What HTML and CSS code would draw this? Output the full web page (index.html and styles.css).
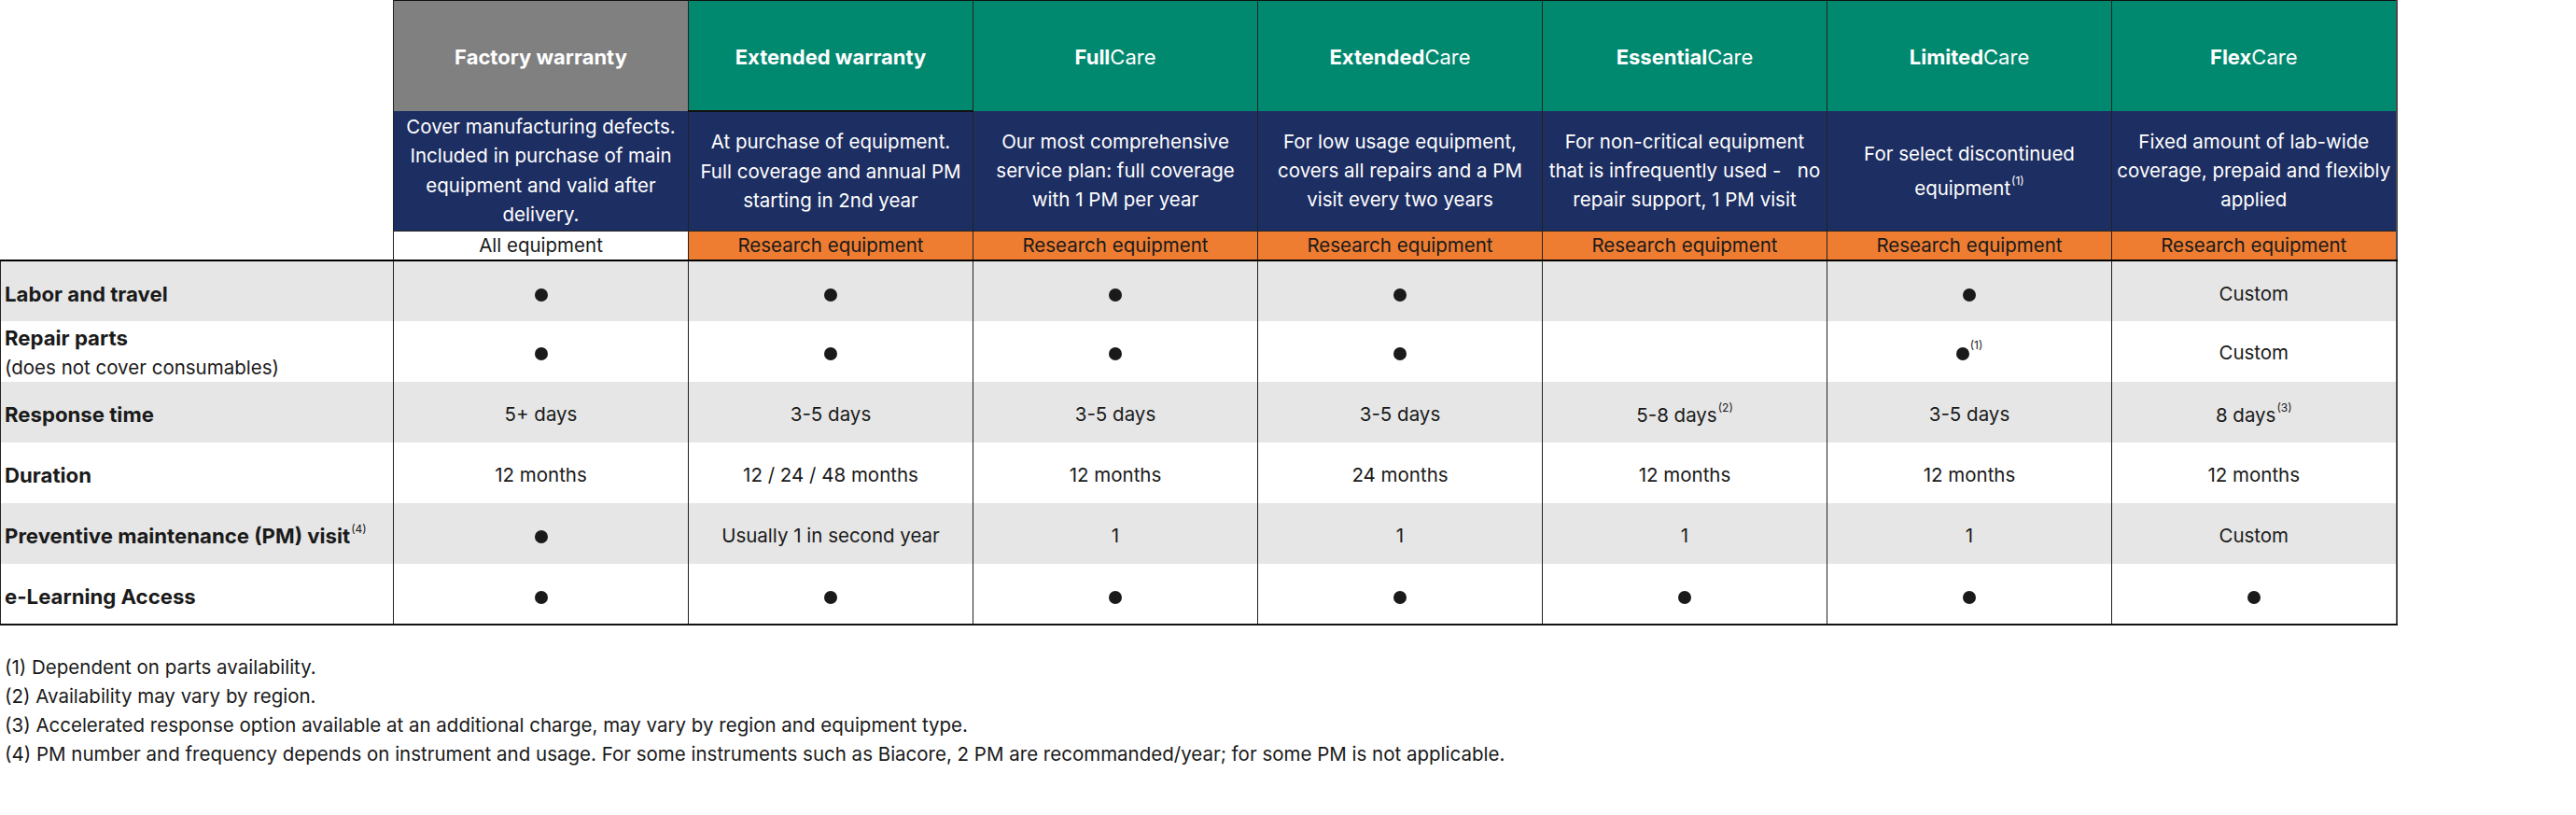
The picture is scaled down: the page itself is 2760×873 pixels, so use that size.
FILE: index.html
```html
<!DOCTYPE html>
<html lang="en">
<head>
<meta charset="utf-8">
<title>Service plans comparison</title>
<link rel="stylesheet" href="styles.css">
</head>
<body>
<table class="plans">
  <colgroup>
    <col class="c-label">
    <col class="c-factory">
    <col class="c-plan" span="6">
  </colgroup>
  <thead>
    <tr class="r-name">
      <th class="corner"></th>
      <th class="name factory">Factory warranty</th>
      <th class="name green ext">Extended warranty</th>
      <th class="name green">Full<span class="reg">Care</span></th>
      <th class="name green">Extended<span class="reg">Care</span></th>
      <th class="name green">Essential<span class="reg">Care</span></th>
      <th class="name green">Limited<span class="reg">Care</span></th>
      <th class="name green last">Flex<span class="reg">Care</span></th>
    </tr>
    <tr class="r-desc">
      <th class="corner"></th>
      <td class="desc">Cover manufacturing defects.<br>Included in purchase of main<br>equipment and valid after<br>delivery.</td>
      <td class="desc">At purchase of equipment.<br>Full coverage and annual PM<br>starting in 2nd year</td>
      <td class="desc">Our most comprehensive<br>service plan: full coverage<br>with 1 PM per year</td>
      <td class="desc">For low usage equipment,<br>covers all repairs and a PM<br>visit every two years</td>
      <td class="desc">For non-critical equipment<br>that is infrequently used -&nbsp;&nbsp; no<br>repair support, 1 PM visit</td>
      <td class="desc tall">For select discontinued<br>equipment<sup class="fn">(1)</sup></td>
      <td class="desc last">Fixed amount of lab-wide<br>coverage, prepaid and flexibly<br>applied</td>
    </tr>
    <tr class="r-scope">
      <th class="corner"></th>
      <td class="scope all">All equipment</td>
      <td class="scope">Research equipment</td>
      <td class="scope">Research equipment</td>
      <td class="scope">Research equipment</td>
      <td class="scope">Research equipment</td>
      <td class="scope">Research equipment</td>
      <td class="scope last">Research equipment</td>
    </tr>
  </thead>
  <tbody>
    <tr class="shade">
      <th class="label"><strong>Labor and travel</strong></th>
      <td><span class="dot"></span></td>
      <td><span class="dot"></span></td>
      <td><span class="dot"></span></td>
      <td><span class="dot"></span></td>
      <td></td>
      <td><span class="dot"></span></td>
      <td class="last">Custom</td>
    </tr>
    <tr class="plain two">
      <th class="label"><strong>Repair parts</strong><br><span class="sub">(does not cover consumables)</span></th>
      <td><span class="dot"></span></td>
      <td><span class="dot"></span></td>
      <td><span class="dot"></span></td>
      <td><span class="dot"></span></td>
      <td></td>
      <td><span class="dot"></span><sup class="fn">(1)</sup></td>
      <td class="last">Custom</td>
    </tr>
    <tr class="shade">
      <th class="label"><strong>Response time</strong></th>
      <td>5+ days</td>
      <td>3-5 days</td>
      <td>3-5 days</td>
      <td>3-5 days</td>
      <td>5-8 days<sup class="fn">(2)</sup></td>
      <td>3-5 days</td>
      <td class="last">8 days<sup class="fn">(3)</sup></td>
    </tr>
    <tr class="plain">
      <th class="label"><strong>Duration</strong></th>
      <td>12 months</td>
      <td>12 / 24 / 48 months</td>
      <td>12 months</td>
      <td>24 months</td>
      <td>12 months</td>
      <td>12 months</td>
      <td class="last">12 months</td>
    </tr>
    <tr class="shade">
      <th class="label"><strong>Preventive maintenance (PM) visit</strong><sup class="fn">(4)</sup></th>
      <td><span class="dot"></span></td>
      <td>Usually 1 in second year</td>
      <td>1</td>
      <td>1</td>
      <td>1</td>
      <td>1</td>
      <td class="last">Custom</td>
    </tr>
    <tr class="plain end">
      <th class="label"><strong>e-Learning Access</strong></th>
      <td><span class="dot"></span></td>
      <td><span class="dot"></span></td>
      <td><span class="dot"></span></td>
      <td><span class="dot"></span></td>
      <td><span class="dot"></span></td>
      <td><span class="dot"></span></td>
      <td class="last"><span class="dot"></span></td>
    </tr>
  </tbody>
</table>
<div class="notes">
  <p>(1) Dependent on parts availability.</p>
  <p>(2) Availability may vary by region.</p>
  <p>(3) Accelerated response option available at an additional charge, may vary by region and equipment type.</p>
  <p>(4) PM number and frequency depends on instrument and usage. For some instruments such as Biacore, 2 PM are recommanded/year; for some PM is not applicable.</p>
</div>
</body>
</html>
```
FILE: styles.css
```css
body {
  margin: 0;
  background: #ffffff;
  color: #1a1a1a;
  font-family: Inter, "Liberation Sans", Arial, sans-serif;
  font-size: 20.5px;
}

.plans {
  border-collapse: collapse;
  table-layout: fixed;
  width: 2568px;
}

.c-label { width: 421px; }
.c-factory { width: 316px; }
.c-plan { width: 305px; }

.plans th,
.plans td {
  padding: 0;
  text-align: center;
  vertical-align: middle;
  font-weight: 400;
  border-left: 1px solid #222222;
  border-right: 1px solid #222222;
  border-top: none;
  border-bottom: none;
}

.plans .corner {
  border-left: none;
  border-top: none;
  background: #ffffff;
}

.plans .last {
  border-right: 2px solid #4a4a4a;
}

/* header: plan names */
.r-name { height: 118px; }

.plans .name {
  color: #ffffff;
  font-weight: 700;
  font-size: 22px;
  padding-top: 3px;
  border-top: 1px solid #111111;
}

.name .reg { font-weight: 400; }

.factory { background: #808080; }
.green { background: #00896f; }
.plans .ext { border-bottom: 2px solid #111111; }

/* header: descriptions */
.r-desc { height: 129px; }

.plans .desc {
  background: #1d2e62;
  color: #ffffff;
  line-height: 31.3px;
  border-bottom: 1px solid #222222;
}

.plans .desc.tall { line-height: 37px; }

/* header: scope */
.r-scope { height: 31px; }

.plans .r-scope > * {
  border-bottom: 2px solid #000000;
}

.scope {
  background: #ee7d32;
  color: #1a1a1a;
  line-height: 28px;
}

.scope.all { background: #ffffff; }

/* body */
.plans tbody tr { height: 65px; }
.plans tbody tr.shade { background: #e6e6e6; }
.plans tbody tr.plain { background: #ffffff; }

.plans tbody th,
.plans tbody td {
  padding-top: 5px;
}

.plans tbody .two > * {
  padding-top: 2px;
}

.plans .label {
  text-align: left;
  padding-left: 4px;
  border-left: 1px solid #222222;
}

.label strong {
  font-weight: 700;
  font-size: 22.2px;
}

.two .label { line-height: 31px; }

.plans .end > * {
  border-bottom: 2px solid #111111;
}

.dot {
  display: inline-block;
  width: 14px;
  height: 14px;
  border-radius: 50%;
  background: #1a1a1a;
  vertical-align: middle;
}

.fn {
  font-size: 12px;
  line-height: 1;
  vertical-align: 11px;
  margin-left: 1px;
}

/* footnotes */
.notes {
  padding: 29px 0 0 5px;
  line-height: 31px;
}

.notes p { margin: 0; }
```
